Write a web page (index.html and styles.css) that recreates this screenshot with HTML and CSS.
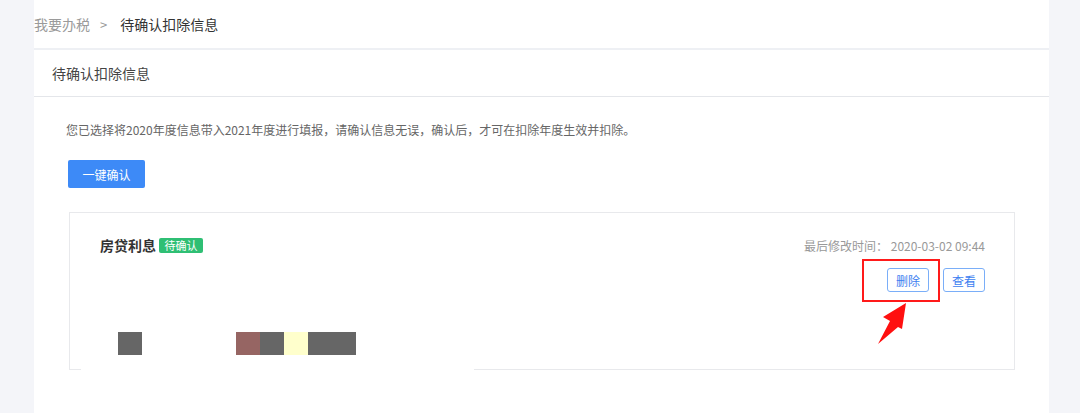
FILE: index.html
```html
<!DOCTYPE html>
<html lang="zh-CN">
<head>
    <meta charset="UTF-8">
    <meta name="viewport" content="width=device-width, initial-scale=1.0">
    <title>待确认扣除信息</title>
    <link rel="stylesheet" href="styles.css">
</head>
<body>

    <div class="page">
        <div class="side side-left"></div>

        <div class="panel">
            <div class="crumbs">
                <span class="crumb-link">我要办税</span>
                <span class="crumb-sep">&gt;</span>
                <span class="crumb-current">待确认扣除信息</span>
            </div>

            <div class="panel-title">待确认扣除信息</div>

            <div class="panel-body">
                <p class="notice">您已选择将2020年度信息带入2021年度进行填报，请确认信息无误，确认后，才可在扣除年度生效并扣除。</p>
                <button class="btn-primary" type="button">一键确认</button>

                <div class="card">
                    <div class="card-head">
                        <div class="card-name">
                            <span>房贷利息</span>
                            <span class="tag">待确认</span>
                        </div>
                        <div class="card-time">最后修改时间：&nbsp;2020-03-02 09:44</div>
                    </div>

                    <div class="card-actions">
                        <button class="btn-line" type="button">删除</button>
                        <button class="btn-line" type="button">查看</button>
                    </div>

                    <!-- redacted values -->
                    <div class="mask-row">
                        <span class="mask dark"></span>
                        <span class="mask-gap"></span>
                        <span class="mask brown"></span>
                        <span class="mask dark"></span>
                        <span class="mask yellow"></span>
                        <span class="mask dark wide"></span>
                    </div>

                    <div class="cover"></div>
                    <div class="highlight"></div>
                    <svg class="pointer" width="34" height="46" viewBox="0 0 34 46">
                        <polygon points="30,2 7,16 14,20 2,43 22,26 26,28" fill="#ff1010"/>
                    </svg>
                </div>
            </div>
        </div>

        <div class="side"></div>
    </div>

</body>
</html>
```

FILE: styles.css
```css
body {
    margin: 0;
    background: #f4f5f9;
    font-family: "Noto Sans CJK SC", "Noto Sans", sans-serif;
}

.page {
    display: flex;
    width: 1080px;
    height: 413px;
    overflow: hidden;
}

.side {
    flex: 1;
    background: #f4f5f9;
}

.side-left {
    flex: none;
    width: 34px;
}

.panel {
    width: 1015px;
    flex: none;
    background: #fff;
}

/* Breadcrumb */
.crumbs {
    display: flex;
    align-items: center;
    height: 48px;
    font-size: 14px;
    border-bottom: 2px solid #eef0f4;
}

.crumb-link {
    color: #9a9a9a;
}

.crumb-sep {
    margin: 0 13px 0 10px;
    color: #999;
    font-size: 13px;
}

.crumb-current {
    color: #333;
}

/* Section title */
.panel-title {
    display: flex;
    align-items: center;
    height: 46px;
    padding-left: 18px;
    font-size: 14px;
    color: #444;
    border-bottom: 1px solid #e4e6ea;
}

.panel-body {
    padding: 0 34px 0 32px;
}

.notice {
    margin: 23px 0 0;
    font-size: 12px;
    line-height: 20px;
    color: #666;
}

.btn-primary {
    margin: 20px 0 0 2px;
    width: 77px;
    height: 28px;
    border: none;
    border-radius: 2px;
    background: #3d8af7;
    color: #fff;
    font-family: inherit;
    font-size: 12px;
    cursor: pointer;
}

/* Deduction card */
.card {
    position: relative;
    box-sizing: border-box;
    margin: 24px 0 0 3px;
    height: 158px;
    padding: 20px 29px 0 30px;
    border: 1px solid #e8e9ec;
}

.card-head {
    display: flex;
    justify-content: space-between;
    align-items: center;
    height: 24px;
}

.card-name {
    display: flex;
    align-items: center;
    gap: 3px;
    font-size: 14px;
    font-weight: bold;
    color: #333;
}

.tag {
    display: inline-flex;
    align-items: center;
    justify-content: center;
    width: 44px;
    height: 15px;
    border-radius: 2px;
    background: #2fbf74;
    color: #fff;
    font-size: 11px;
    font-weight: normal;
}

.card-time {
    font-size: 12px;
    color: #999;
}

.card-actions {
    display: flex;
    justify-content: flex-end;
    gap: 14px;
    margin-top: 11px;
}

.btn-line {
    width: 42px;
    height: 24px;
    padding: 0;
    border: 1px solid #7aaef8;
    border-radius: 3px;
    background: #fff;
    color: #3d7ef0;
    font-family: inherit;
    font-size: 12px;
    cursor: pointer;
}

.mask-row {
    display: flex;
    margin: 40px 0 0 18px;
}

.mask {
    width: 24px;
    height: 23px;
}

.mask-gap {
    width: 94px;
}

.dark {
    background: #666;
}

.brown {
    background: #966563;
}

.yellow {
    background: #ffffcc;
}

.wide {
    width: 48px;
}

/* white patch left over the bottom border */
.cover {
    position: absolute;
    left: 11px;
    bottom: -2px;
    width: 393px;
    height: 3px;
    background: #fff;
}

/* Annotation over the delete button */
.highlight {
    position: absolute;
    left: 792px;
    top: 46px;
    width: 74px;
    height: 39px;
    border: 2px solid #ff1a1a;
}

.pointer {
    position: absolute;
    left: 806px;
    top: 88px;
}
```
